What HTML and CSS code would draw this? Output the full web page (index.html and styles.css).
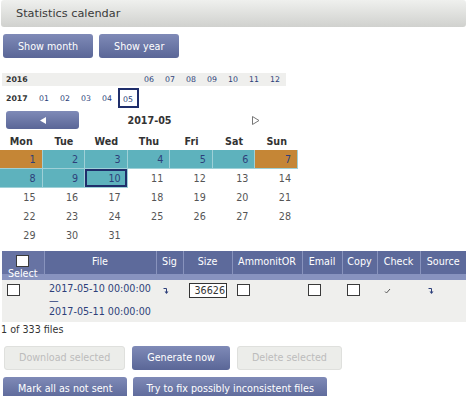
FILE: index.html
```html
<!DOCTYPE html>
<html lang="en">
<head>
    <meta charset="UTF-8">
    <title>Statistics calendar</title>
    <link rel="stylesheet" href="styles.css">
</head>
<body>
    <div class="titlebar">Statistics calendar</div>

    <div class="views">
        <button class="btn">Show month</button>
        <button class="btn">Show year</button>
    </div>

    <table class="months">
        <tr class="odd">
            <th>2016</th>
            <td></td><td></td><td></td><td></td><td></td>
            <td><a>06</a></td><td><a>07</a></td><td><a>08</a></td><td><a>09</a></td>
            <td><a>10</a></td><td><a>11</a></td><td><a>12</a></td>
        </tr>
        <tr>
            <th>2017</th>
            <td><a>01</a></td><td><a>02</a></td><td><a>03</a></td><td><a>04</a></td>
            <td class="sel"><a>05</a></td>
            <td></td><td></td><td></td><td></td><td></td><td></td><td></td>
        </tr>
    </table>

    <div class="calnav">
        <button class="btn prev">
            <svg width="6" height="7" viewBox="0 0 6 7"><polygon points="6,0 6,7 0,3.5" fill="#fff"/></svg>
        </button>
        <span class="month">2017-05</span>
        <span class="next">
            <svg width="8" height="9" viewBox="0 0 8 9"><polygon points="0.5,0.5 7,4.5 0.5,8.5" fill="none" stroke="#777"/></svg>
        </span>
    </div>

    <table class="days">
        <tr><th>Mon</th><th>Tue</th><th>Wed</th><th>Thu</th><th>Fri</th><th>Sat</th><th>Sun</th></tr>
        <tr>
            <td class="we">1</td><td class="has">2</td><td class="has">3</td><td class="has">4</td>
            <td class="has">5</td><td class="has">6</td><td class="we">7</td>
        </tr>
        <tr>
            <td class="has">8</td><td class="has">9</td><td class="has today">10</td>
            <td>11</td><td>12</td><td>13</td><td>14</td>
        </tr>
        <tr><td>15</td><td>16</td><td>17</td><td>18</td><td>19</td><td>20</td><td>21</td></tr>
        <tr><td>22</td><td>23</td><td>24</td><td>25</td><td>26</td><td>27</td><td>28</td></tr>
        <tr><td>29</td><td>30</td><td>31</td><td></td><td></td><td></td><td></td></tr>
    </table>

    <table class="files">
        <colgroup>
            <col class="c-sel"><col class="c-file"><col class="c-sig"><col class="c-size">
            <col class="c-amm"><col class="c-mail"><col class="c-copy"><col class="c-check"><col class="c-src">
        </colgroup>
        <tr>
            <th class="sel"><input type="checkbox" class="box"><div>Select</div></th>
            <th>File</th>
            <th>Sig</th>
            <th>Size</th>
            <th>AmmonitOR</th>
            <th>Email</th>
            <th>Copy</th>
            <th>Check</th>
            <th>Source</th>
        </tr>
        <tr class="row">
            <td><input type="checkbox" class="box"></td>
            <td class="file">2017-05-10 00:00:00<br>—<br>2017-05-11 00:00:00</td>
            <td class="glyph">
                <svg width="6" height="7" viewBox="0 0 6 7"><path d="M0.5 1.5H3.5V5" fill="none" stroke="#2d3f7a"/><polygon points="1.5,4.5 5.5,4.5 3.5,7" fill="#2d3f7a"/></svg>
            </td>
            <td class="size"><input type="text" value="36626"></td>
            <td><input type="checkbox" class="box"></td>
            <td class="mail"><input type="checkbox" class="box"></td>
            <td><input type="checkbox" class="box"></td>
            <td class="glyph">
                <svg width="7" height="6" viewBox="0 0 7 6"><polyline points="1,3.5 2.5,5 6,1" fill="none" stroke="#555"/></svg>
            </td>
            <td class="glyph src">
                <svg width="6" height="7" viewBox="0 0 6 7"><path d="M0.5 1.5H3.5V5" fill="none" stroke="#2d3f7a"/><polygon points="1.5,4.5 5.5,4.5 3.5,7" fill="#2d3f7a"/></svg>
            </td>
        </tr>
    </table>
    <p class="count">1 of 333 files</p>

    <div class="actions">
        <div class="line">
            <button class="btn off">Download selected</button>
            <button class="btn">Generate now</button>
            <button class="btn off">Delete selected</button>
        </div>
        <div class="line second">
            <button class="btn">Mark all as not sent</button>
            <button class="btn wide">Try to fix possibly inconsistent files</button>
        </div>
    </div>
</body>
</html>
```

FILE: styles.css
```css
body {
    margin: 0;
    width: 468px;
    font-family: "DejaVu Sans", Verdana, sans-serif;
    font-size: 9.6px;
    color: #333;
    background: #fff;
}
.titlebar {
    margin: 0 2px 0 1px;
    height: 27px;
    line-height: 27px;
    padding-left: 15px;
    font-size: 11.3px;
    color: #3a3a3a;
    background: linear-gradient(#eff0ee, #d0d1ce);
    border-radius: 3px;
}
.btn {
    font-family: inherit;
    font-size: 9.6px;
    color: #fff;
    height: 24px;
    padding: 0 15px;
    border: 0;
    border-radius: 3px;
    background: linear-gradient(#7f8ab7, #5a6697);
}
.btn.off {
    padding: 0 14px;
    color: #bcbcbc;
    background: #ecedea;
    border: 1px solid #dfe0dd;
}
.btn.wide {
    padding: 0 13px;
}
.views {
    display: flex;
    gap: 6px;
    margin-top: 7px;
    padding-left: 3px;
}

/* month picker */
.months {
    margin: 13px 0 0 2px;
    border-collapse: separate;
    border-spacing: 0 2px;
    font-size: 7.8px;
}
.months th {
    width: 28px;
    padding: 0 0 0 4px;
    text-align: left;
    font-weight: bold;
    color: #333;
}
.months td {
    width: 11px;
    padding: 0 5px;
    height: 13px;
    color: #2d3f7a;
}
.months .odd th,
.months .odd td {
    background: #efefed;
}
.months td.sel {
    padding: 2px 3px 0;
    height: 14px;
    border: 2px solid #1f2e6b;
}

/* calendar */
.calnav {
    display: grid;
    grid-template-columns: 79px 141px 40px;
    align-items: center;
    height: 18px;
    margin-top: 1px;
}
.btn.prev {
    width: 73px;
    height: 18px;
    margin-left: 6px;
    padding: 0;
    display: flex;
    align-items: center;
    justify-content: center;
}
.month {
    text-align: center;
    font-weight: bold;
    color: #333;
}
.next {
    padding-left: 32px;
    display: flex;
}
.days {
    width: 298px;
    margin-top: 3px;
    table-layout: fixed;
    border-collapse: separate;
    border-spacing: 0;
}
.days th {
    height: 18px;
    padding: 0;
    font-weight: bold;
    color: #333;
}
.days td {
    height: 18px;
    padding: 0 6px 0 0;
    text-align: right;
    color: #555;
    border-right: 1px solid transparent;
    border-bottom: 1px solid transparent;
}
.days td.has {
    background: #5eb2bd;
    color: #2d3f7a;
    border-color: #9ed0d7;
}
.days td.we {
    background: #c58636;
    color: #2d3f7a;
    border-color: #9ed0d7;
}
.days td.today {
    box-shadow: inset 0 0 0 2px #1f2e6b;
}

/* file list */
.files {
    width: 464px;
    margin: 6px 0 0 2px;
    table-layout: fixed;
    border-collapse: collapse;
}
.c-sel { width: 42px; }
.c-file { width: 112px; }
.c-sig { width: 27px; }
.c-size { width: 49px; }
.c-amm { width: 70px; }
.c-mail { width: 40px; }
.c-copy { width: 35px; }
.c-check { width: 43px; }
.c-src { width: 46px; }
.files th {
    height: 24px;
    padding: 5px 0 0;
    vertical-align: top;
    font-weight: normal;
    color: #fff;
    text-align: center;
    background: linear-gradient(#5d6a9b 0, #5d6a9b 23px, #8893bf 23px);
    border-left: 1px solid #8893bd;
}
.files th:first-child {
    border-left: 0;
}
.files th.sel {
    height: 25px;
    padding-top: 4px;
    background: linear-gradient(#6773a3 0, #6773a3 23px, #8893bf 23px);
}
.files th.sel .box {
    margin: 0 auto 1px;
}
.box {
    appearance: none;
    display: block;
    width: 13px;
    height: 12px;
    margin: 0;
    border: 1px solid #3a3a3a;
    border-radius: 0;
    background: #fff;
}
.row td {
    vertical-align: top;
    padding: 4px 0 0 5px;
    background: #efefed;
}
.row td.mail {
    padding-left: 6px;
}
.row td.file {
    padding: 3px 0 4px 5px;
    line-height: 11.5px;
    color: #2d3f7a;
}
.row td.glyph {
    padding: 5px 0 0 7px;
}
.row td.src {
    padding-left: 8px;
}
.row td.size {
    padding: 3px 0 0 6px;
}
.size input {
    box-sizing: border-box;
    width: 38px;
    height: 15px;
    padding: 0 1px;
    border: 1px solid #333;
    font-family: inherit;
    font-size: 9.6px;
    text-align: right;
    color: #333;
}
.count {
    margin: 0;
    padding: 2px 0 0 1px;
    line-height: 12px;
}
.actions {
    display: flex;
    flex-direction: column;
    gap: 7px;
    margin-top: 10px;
    padding-left: 4px;
}
.line {
    display: flex;
    gap: 7px;
}
.line.second {
    gap: 6px;
    margin-left: -1px;
}
.line.second .btn {
    height: 23px;
}
```
